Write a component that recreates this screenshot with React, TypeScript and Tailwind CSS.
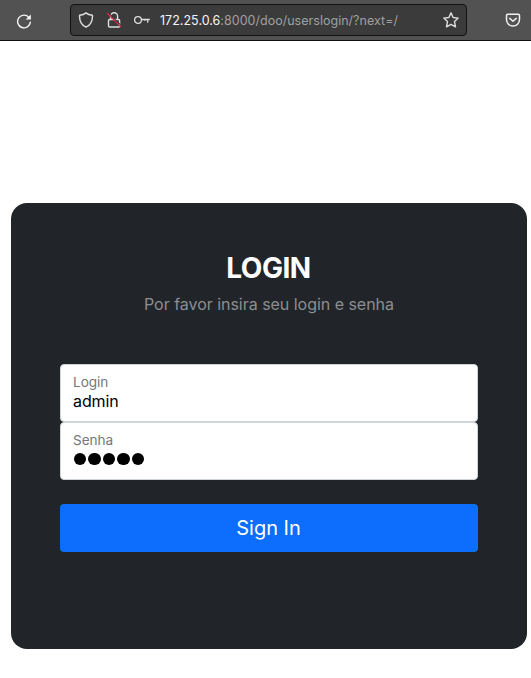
import React from "react";

const iconProps = {
  fill: "none",
  strokeLinecap: "round" as const,
  strokeLinejoin: "round" as const,
};

function ReloadIcon() {
  return (
    <svg width="16" height="16" viewBox="0 0 16 16" {...iconProps} className="shrink-0">
      <path d="M12.8 4.2A6.400 6.400 0 1 0 14.400 9.200" stroke="#f4f4f4" strokeWidth="1.4" />
      <path d="M14.900 1.400V6.400H9.600Z" fill="#f4f4f4" />
    </svg>
  );
}

function ShieldIcon() {
  return (
    <svg width="16" height="16" viewBox="0 0 16 16" {...iconProps} stroke="#dedede" strokeWidth="1.4" className="shrink-0">
      <path d="M8 .9C6.400 2.300 4 3 1.600 3.200 1.200 8.400 3.200 12.900 8 15.200c4.800-2.300 6.800-6.800 6.400-12C12 3 9.600 2.300 8 .9Z" />
    </svg>
  );
}

function InsecureLockIcon() {
  return (
    <svg width="16" height="16" viewBox="0 0 16 16" {...iconProps} className="shrink-0">
      <path
        d="M4.600 7.500V4.300a3.500 3.500 0 0 1 7 0V7.500M3.700 7.500h8.700a1.200 1.200 0 0 1 1.200 1.200v5.100a1.200 1.200 0 0 1-1.200 1.200H3.700a1.200 1.200 0 0 1-1.200-1.200V8.700a1.200 1.200 0 0 1 1.200-1.200Z"
        stroke="#dedede"
        strokeWidth="1.4"
      />
      <path d="M2.800 1.200 15.300 13.700" stroke="#3b3b3b" strokeWidth="1.200" />
      <path d="M1.400 1.400 14.600 14.600" stroke="#e22850" strokeWidth="1.300" />
    </svg>
  );
}

function KeyIcon() {
  return (
    <svg width="16" height="16" viewBox="0 0 16 16" {...iconProps} stroke="#dedede" strokeWidth="1.300" className="shrink-0">
      <circle cx="4" cy="8" r="3.400" />
      <path d="M7.500 7.500H15.300M13.700 7.500V10.200" />
      <path d="M10.900 7.500V8.600" strokeWidth="1" />
    </svg>
  );
}

function StarIcon() {
  return (
    <svg width="16" height="16" viewBox="0 0 16 16" {...iconProps} stroke="#dedede" strokeWidth="1.400" className="shrink-0">
      <path d="M8 .9 10.100 5.500 15.200 6.100 11.500 9.600 12.500 14.800 8 12.300 3.500 14.800 4.500 9.600.8 6.100 5.900 5.500Z" />
    </svg>
  );
}

function PocketIcon() {
  return (
    <svg width="16" height="16" viewBox="0 0 16 16" {...iconProps} stroke="#f0f0f0" strokeWidth="1.500" className="shrink-0">
      <path d="M2.700 2.200h10.600a1.200 1.200 0 0 1 1.200 1.200v4.200a6.500 6.500 0 0 1-13 0V3.400a1.200 1.200 0 0 1 1.200-1.200Z" />
      <path d="M4.800 6.400 8 9.300 11.200 6.400" />
    </svg>
  );
}

function BrowserBar() {
  return (
    <header className="flex h-[41px] items-center border-b border-[#111] bg-[#525252] pr-[10px] pl-4">
      <span className="flex pt-px"><ReloadIcon /></span>
      <div className="ml-[38px] flex h-8 w-[397px] shrink-0 items-center rounded-[4px] border border-[#111] bg-[#3b3b3b] px-[7px]">
        <ShieldIcon />
        <span className="ml-3 flex"><InsecureLockIcon /></span>
        <span className="ml-3 flex"><KeyIcon /></span>
        <span className="ml-[10px] pt-[2px] text-[12.5px] leading-4 tracking-[0.02px] whitespace-nowrap text-[#a0a0a0]">
          <span className="text-[#f5f5f5]">172.25.0.6</span>:8000/doo/userslogin/?next=/
        </span>
        <span className="ml-auto flex"><StarIcon /></span>
      </div>
      <span className="ml-auto flex"><PocketIcon /></span>
    </header>
  );
}

function Field({ label, children }: { label: string; children: React.ReactNode }) {
  return (
    <div className="h-[58px] rounded-[4px] border border-[#ced4da] bg-white px-3 pt-[7px]">
      <div className="h-5 text-[13.6px] leading-5 tracking-[-0.04px] text-[#777]">{label}</div>
      <div className="flex h-[18px] items-center text-base leading-[18px] tracking-[-0.1px] text-black">{children}</div>
    </div>
  );
}

export default function App() {
  return (
    <div className="h-[678px] w-[531px] overflow-hidden bg-white font-['Inter','Liberation_Sans',sans-serif]">
      <BrowserBar />
      <main className="mt-[162px] ml-[11px] h-[446px] w-[516px] rounded-2xl bg-[#212529] px-[49px] pt-12">
        <h1 className="pr-px text-center text-[28px] leading-[34px] font-bold tracking-[-0.5px] text-white">LOGIN</h1>
        <p className="mt-[7px] text-center text-base leading-6 tracking-[-0.03px] text-[#8c8e91]">Por favor insira seu login e senha</p>
        <form className="mt-12">
          <Field label="Login">admin</Field>
          <Field label="Senha">
            <span className="flex gap-[2.100px] pl-[0.500px]">
              {[0, 1, 2, 3, 4].map((dot) => (
                <span key={dot} className="h-[12.500px] w-[12.500px] rounded-full bg-black" />
              ))}
            </span>
          </Field>
          <button type="button" className="mt-6 block h-12 w-full rounded-[4px] bg-[#0d6efd] pr-px text-center text-xl font-[370] text-white">
            Sign In
          </button>
        </form>
      </main>
    </div>
  );
}
